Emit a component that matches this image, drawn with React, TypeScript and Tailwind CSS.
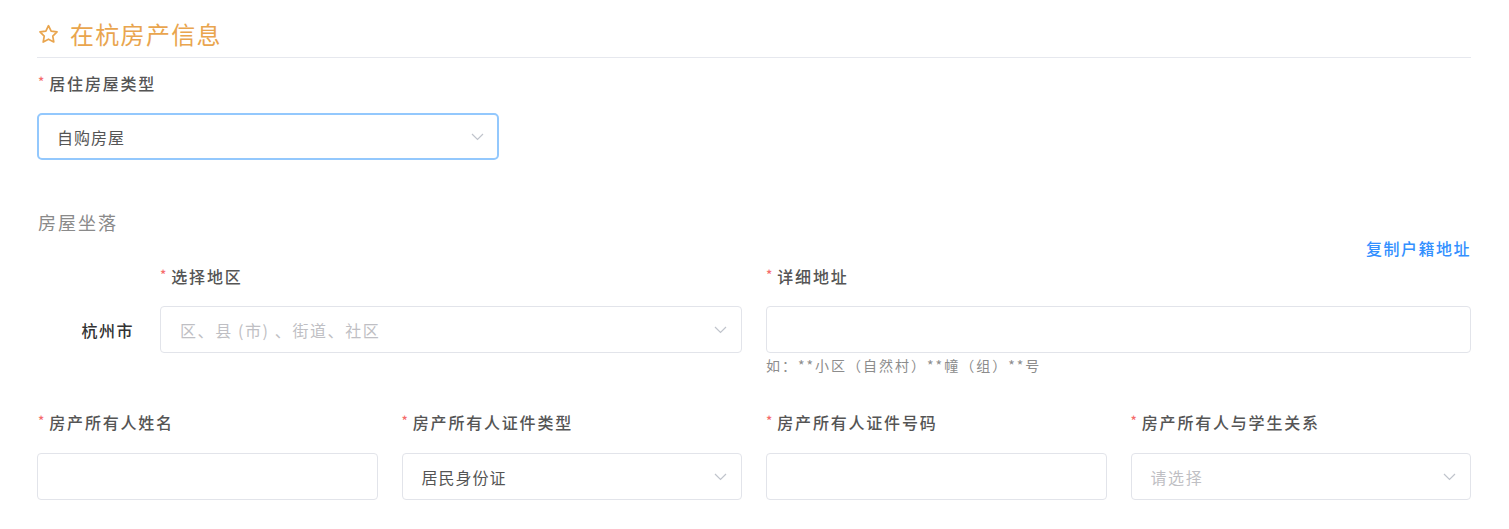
import React from "react";

const font = { fontFamily: '"Noto Sans CJK SC", "Noto Sans", sans-serif' };

function Chevron() {
  return (
    <svg width="13" height="8" viewBox="0 0 13 8" fill="none" className="shrink-0">
      <path d="M1 1l5.5 5.5L12 1" stroke="#c0c4cc" strokeWidth="1.2" />
    </svg>
  );
}

function Label({ text }: { text: string }) {
  return (
    <div className="flex items-center h-[22px] text-[16px] leading-[22px] font-medium text-[#555] tracking-[1.8px]">
      <span className="text-[#f56c6c] text-[13px] mr-[5px] -mt-[3px] tracking-normal">*</span>
      <span>{text}</span>
    </div>
  );
}

function Select({ value, placeholder, active }: { value?: string; placeholder?: string; active?: boolean }) {
  return (
    <div
      className={
        active
          ? "h-[47px] rounded-[5px] border-2 border-[#93c8fd] bg-white flex items-center justify-between pl-[18px] pr-[13px]"
          : "h-[47px] rounded-[4px] border border-[#e2e4ea] bg-white flex items-center justify-between pl-[19px] pr-[14px]"
      }
    >
      {value ? (
        <span className="text-[16px] text-[#555] tracking-[1px]">{value}</span>
      ) : (
        <span className="text-[16px] text-[#bfbfc4] tracking-[1.6px]">{placeholder}</span>
      )}
      <Chevron />
    </div>
  );
}

function Input() {
  return <div className="h-[47px] rounded-[4px] border border-[#e2e4ea] bg-white" />;
}

export default function App() {
  return (
    <div className="w-[1509px] h-[529px] bg-white pl-[37px] pr-[38px] overflow-hidden" style={font}>
      {/* Header */}
      <div className="pt-[20px] pb-[9px] border-b border-[#e6e8ee] flex items-center">
        <svg width="23" height="23" viewBox="0 0 24 24" fill="none" className="mr-[10px]">
          <path
            d="M12 2.8l2.75 5.6 6.15.9-4.45 4.35 1.05 6.15L12 16.9l-5.5 2.9 1.05-6.15L3.1 9.3l6.15-.9L12 2.8z"
            stroke="#e9a54e"
            strokeWidth="1.8"
            strokeLinejoin="round"
          />
        </svg>
        <span className="text-[24px] leading-[28px] text-[#e9a54e] tracking-[1.3px]">在杭房产信息</span>
      </div>

      {/* Row 1 */}
      <div className="mt-[14px]">
        <div className="pl-[1px]">
          <Label text="居住房屋类型" />
        </div>
        <div className="grid grid-cols-3 gap-x-[24px] mt-[19px]">
          <Select value="自购房屋" active />
        </div>
      </div>

      {/* Section: 房屋坐落 */}
      <div className="mt-[50px] pl-[1px] text-[18px] leading-[24px] text-[#8a8a8a] tracking-[2px]">房屋坐落</div>
      <div className="mt-[3px] flex justify-end">
        <span className="text-[16px] leading-[22px] font-medium text-[#3390ff] tracking-[1.5px]">复制户籍地址</span>
      </div>

      {/* Row 2 */}
      <div className="mt-[6px] grid grid-cols-2 gap-x-[24px] items-start">
        <div className="grid grid-cols-[123px_1fr] content-start">
          <div />
          <Label text="选择地区" />
          <div className="mt-[19px] h-[47px] flex items-center justify-end pr-[26px] text-[16px] font-medium text-[#333] tracking-[1.5px]">
            杭州市
          </div>
          <div className="mt-[19px]">
            <Select placeholder="区、县 (市) 、街道、社区" />
          </div>
        </div>
        <div>
          <Label text="详细地址" />
          <div className="mt-[19px]">
            <Input />
          </div>
          <div className="mt-[3px] text-[14px] leading-[18px] text-[#8c8c8c] tracking-[2px]">如：**小区（自然村）**幢（组）**号</div>
        </div>
      </div>

      {/* Row 3 */}
      <div className="mt-[37px] grid grid-cols-4 gap-x-[24px]">
        <div>
          <div className="pl-[1px]">
            <Label text="房产所有人姓名" />
          </div>
          <div className="mt-[20px]">
            <Input />
          </div>
        </div>
        <div>
          <Label text="房产所有人证件类型" />
          <div className="mt-[20px]">
            <Select value="居民身份证" />
          </div>
        </div>
        <div>
          <Label text="房产所有人证件号码" />
          <div className="mt-[20px]">
            <Input />
          </div>
        </div>
        <div>
          <Label text="房产所有人与学生关系" />
          <div className="mt-[20px]">
            <Select placeholder="请选择" />
          </div>
        </div>
      </div>
    </div>
  );
}
